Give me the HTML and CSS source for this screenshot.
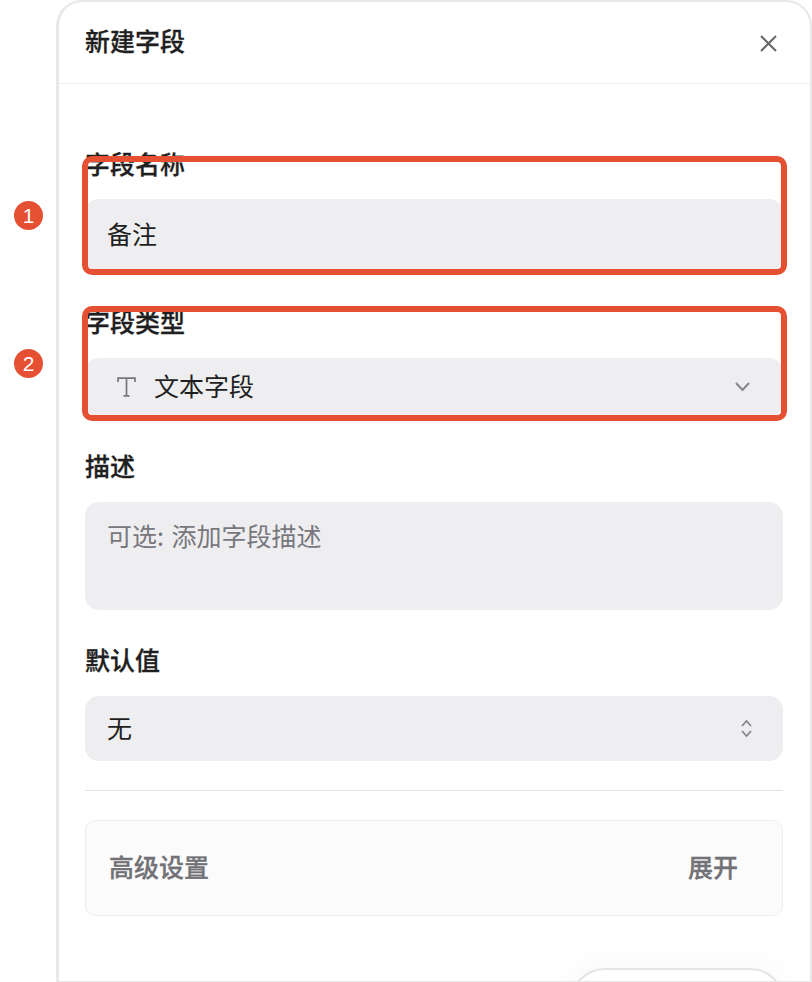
FILE: index.html
```html
<!DOCTYPE html>
<html lang="zh-CN">
<head>
<meta charset="utf-8">
<title>新建字段</title>
<link rel="stylesheet" href="styles.css">
</head>
<body>
<div class="panel">
  <header class="head">
    <h1 class="title">新建字段</h1>
    <svg class="close" width="17" height="17" viewBox="0 0 17 17"><path d="M1 1L16 16M16 1L1 16"/></svg>
  </header>
  <form class="form">
    <div class="field field-name">
      <label class="label">字段名称</label>
      <div class="input input-name">备注</div>
    </div>
    <div class="field field-type">
      <label class="label">字段类型</label>
      <div class="input input-type">
        <svg class="t-icon" width="19" height="20" viewBox="0 0 19 20"><path d="M1 5V1.2H18V5M9.5 1.2V18.8M6.5 18.8H12.5"/></svg>
        <span class="grow type-text">文本字段</span>
        <svg class="chev" width="15" height="9" viewBox="0 0 15 9"><path d="M1 1L7.5 8L14 1"/></svg>
      </div>
    </div>
    <div class="field field-desc">
      <label class="label">描述</label>
      <div class="input input-desc">可选: 添加字段描述</div>
    </div>
    <div class="field field-default">
      <label class="label">默认值</label>
      <div class="input input-default">
        <span class="grow default-text">无</span>
        <svg class="updown" width="11" height="17" viewBox="0 0 11 17"><path d="M1 6L5.5 1L10 6M1 11L5.5 16L10 11"/></svg>
      </div>
    </div>
    <hr class="rule">
    <div class="advanced">
      <span class="adv-text">高级设置</span>
      <span class="adv-text">展开</span>
    </div>
  </form>
  <div class="pill"></div>
</div>
<div class="mark mark-1"></div>
<div class="mark mark-2"></div>
<div class="badge badge-1">1</div>
<div class="badge badge-2">2</div>
</body>
</html>
```
FILE: styles.css
```css
* { box-sizing: border-box; }
html, body { margin: 0; height: 982px; overflow: hidden; background: #fff; }
body {
  position: relative;
  font-family: "Noto Sans CJK SC", "Noto Sans", sans-serif;
  color: #1f1f22;
  font-size: 25px;
  padding-left: 56px;
}
.panel {
  position: relative;
  width: 756px;
  height: 982px;
  overflow: hidden;
  background: #fff;
  border: 2px solid #e8e8ea;
  border-left-width: 3px;
  border-bottom-width: 1px;
  border-radius: 26px 26px 0 0;
}
.head {
  height: 82px;
  display: flex;
  align-items: center;
  justify-content: space-between;
  padding: 0 33px 0 26px;
  border-bottom: 1px solid #f1f1f2;
}
.title, .label, .adv-text { font-size: 25px; font-weight: 500; -webkit-text-stroke: 0.3px currentColor; }
.title { margin: 0 0 6px; line-height: 34px; }
.close { fill: none; stroke: #666668; stroke-width: 2; margin-top: 2px; }
.form { padding: 0 27px 0 26px; display: flex; flex-direction: column; }
.field { display: flex; flex-direction: column; }
.field-name { margin-top: 62px; gap: 19px; }
.field-type { margin-top: 33px; gap: 20px; }
.field-desc { margin-top: 32px; gap: 20px; }
.field-default { margin-top: 32px; gap: 20px; }
.label { line-height: 34px; }
.input {
  background: #eeeef0;
  border-radius: 14px;
  padding: 0 22px;
  display: flex;
  align-items: center;
}
.grow { flex: 1; }
.input-name { height: 72px; padding-bottom: 4px; }
.input-type { height: 58px; padding-left: 32px; }
.type-text { margin-bottom: 4px; }
.input-desc { height: 108px; align-items: flex-start; padding-top: 15px; color: #77777d; line-height: 36px; word-spacing: 2px; }
.input-default { height: 65px; padding-right: 31px; }
.default-text { margin-bottom: 3px; }
.t-icon { fill: none; stroke: #77777b; stroke-width: 1.7; margin-right: 18px; }
.chev { fill: none; stroke: #86868a; stroke-width: 2; margin: 0 11px 1px 0; }
.updown { fill: none; stroke: #86868a; stroke-width: 1.8; }
.rule { width: 100%; height: 1px; margin: 29px 0; border: 0; background: #e4e4e6; }
.advanced {
  height: 96px;
  display: flex;
  align-items: center;
  justify-content: space-between;
  padding: 0 44px 4px 23px;
  background: #fbfbfc;
  border: 1px solid #eeeef0;
  border-radius: 10px;
}
.adv-text { color: #717176; }
.pill {
  position: absolute;
  left: 511px;
  top: 966px;
  width: 215px;
  height: 70px;
  background: #fff;
  border: 2px solid #e5e5e7;
  border-radius: 35px;
  box-shadow: 0 -6px 30px rgba(0,0,0,.03);
}
.mark {
  position: absolute;
  left: 82px;
  width: 705px;
  border: 6px solid #e55032;
  border-radius: 10px;
}
.mark-1 { top: 156px; height: 119px; }
.mark-2 { top: 306px; height: 115px; }
.badge {
  position: absolute;
  left: 14px;
  width: 29px;
  height: 29px;
  border-radius: 50%;
  background: #e55032;
  color: #fff;
  font-family: "Liberation Sans", sans-serif;
  font-size: 21px;
  line-height: 29px;
  text-align: center;
}
.badge-1 { top: 201px; }
.badge-2 { top: 349px; }
```
